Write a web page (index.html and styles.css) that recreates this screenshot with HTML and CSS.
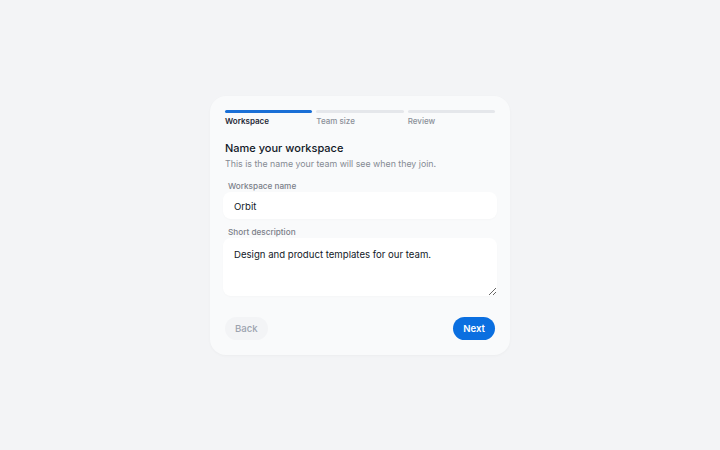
FILE: index.html
```html
<!DOCTYPE html>
<html lang="en">
<head>
<meta charset="utf-8">
<title>Create workspace</title>
<link rel="stylesheet" href="styles.css">
</head>
<body>
<main class="page">
  <section class="card">
    <ol class="steps">
      <li class="step is-active"><span class="bar"></span><span class="step-label">Workspace</span></li>
      <li class="step"><span class="bar"></span><span class="step-label">Team size</span></li>
      <li class="step"><span class="bar"></span><span class="step-label">Review</span></li>
    </ol>
    <h1 class="title">Name your workspace</h1>
    <p class="subtitle">This is the name your team will see when they join.</p>
    <label class="field">
      <span class="field-label">Workspace name</span>
      <input class="input" type="text" value="Orbit">
    </label>
    <label class="field">
      <span class="field-label">Short description</span>
      <textarea class="input textarea">Design and product templates for our team.</textarea>
    </label>
    <div class="actions">
      <button class="btn btn-ghost" type="button">Back</button>
      <button class="btn btn-primary" type="button">Next</button>
    </div>
  </section>
</main>
</body>
</html>
```
FILE: styles.css
```css
* { box-sizing: border-box; }
html, body { margin: 0; height: 100%; }
body {
  background: #f3f4f6;
  font-family: Inter, "Noto Sans", sans-serif;
  color: #111827;
}
.page {
  height: 100%;
  display: flex;
  align-items: center;
  justify-content: center;
}
.card {
  width: 300px;
  background: #f9fafb;
  border-radius: 16px;
  padding: 14px 15px 15px;
  box-shadow: 0 1px 3px rgba(17, 24, 39, 0.03);
}
.steps {
  list-style: none;
  margin: 0;
  padding: 0;
  display: grid;
  grid-template-columns: repeat(3, 1fr);
  gap: 4px;
}
.step { display: flex; flex-direction: column; gap: 2px; }
.bar { height: 3px; border-radius: 2px; background: #e5e7eb; }
.step.is-active .bar { background: #1a6fd6; }
.step-label {
  font-size: 8px;
  font-weight: 500;
  color: #8b9099;
  line-height: 12px;
}
.step.is-active .step-label { color: #1f2937; font-weight: 600; }
.title {
  margin: 13px 0 0;
  font-size: 11px;
  font-weight: 500;
  line-height: 16px;
  color: #111827;
}
.subtitle {
  margin: 1px 0 0;
  font-size: 8.8px;
  line-height: 14px;
  color: #858a93;
}
.field { display: flex; flex-direction: column; margin: 9px -2px 0; }
.field + .field { margin-top: 7px; }
.field-label {
  font-size: 8.2px;
  font-weight: 500;
  color: #7b8089;
  line-height: 12px;
  padding-left: 5px;
}
.input {
  display: block;
  width: 100%;
  height: 27px;
  border: 0;
  border-radius: 8px;
  background: #ffffff;
  padding: 3px 11px 0;
  font-family: inherit;
  font-size: 9.6px;
  color: #111827;
  outline: none;
  box-shadow: 0 1px 2px rgba(17, 24, 39, 0.02);
}
.textarea {
  height: 58px;
  padding: 10px 11px 0;
  line-height: 14px;
  resize: vertical;
}
.actions {
  display: flex;
  justify-content: space-between;
  margin-top: 21px;
}
.btn {
  height: 23px;
  border: 0;
  border-radius: 12px;
  padding: 0 10px;
  font-family: inherit;
  font-size: 9.6px;
  cursor: pointer;
}
.btn-ghost { background: #f3f4f6; color: #9ca3af; font-weight: 500; }
.btn-primary { background: #0b6fe0; color: #ffffff; font-weight: 600; }
```
